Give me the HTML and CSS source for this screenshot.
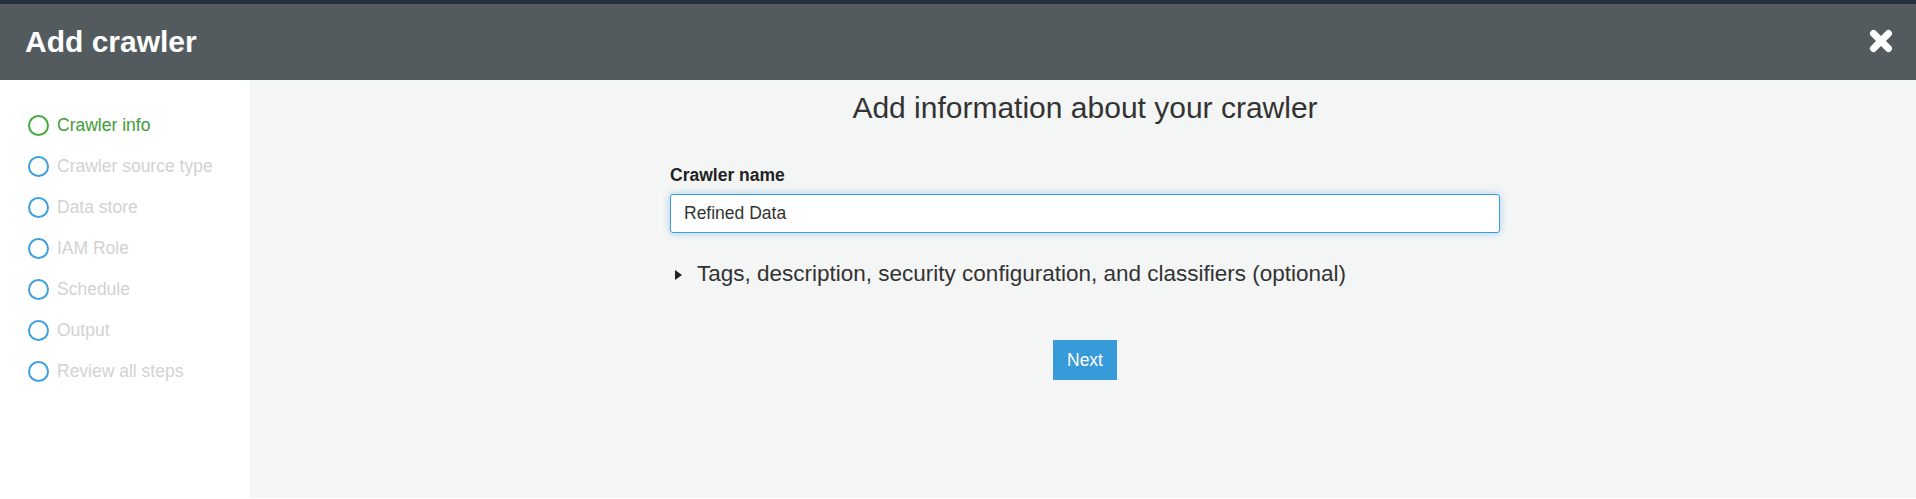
FILE: index.html
```html
<!DOCTYPE html>
<html lang="en">
<head>
<meta charset="utf-8">
<title>Add crawler</title>
<link rel="stylesheet" href="styles.css">
</head>
<body>
<div class="app">
  <div class="topstrip"></div>
  <header class="header">
    <h1 class="title">Add crawler</h1>
    <button class="close" aria-label="Close">
      <svg width="24" height="24" viewBox="0 0 24 24"><path d="M4.5 4.5 L19.5 19.5 M19.5 4.5 L4.5 19.5" stroke="#fff" stroke-width="7" stroke-linecap="round" fill="none"/></svg>
    </button>
  </header>
  <div class="body">
    <nav class="sidebar">
      <ul class="steps">
        <li class="step active"><span class="dot"></span>Crawler info</li>
        <li class="step"><span class="dot"></span>Crawler source type</li>
        <li class="step"><span class="dot"></span>Data store</li>
        <li class="step"><span class="dot"></span>IAM Role</li>
        <li class="step"><span class="dot"></span>Schedule</li>
        <li class="step"><span class="dot"></span>Output</li>
        <li class="step"><span class="dot"></span>Review all steps</li>
      </ul>
    </nav>
    <main class="main">
      <div class="column">
        <h2 class="heading">Add information about your crawler</h2>
        <label class="label" for="name">Crawler name</label>
        <input class="input" id="name" type="text" value="Refined Data">
        <div class="expander">
          <span class="caret"></span>
          <span>Tags, description, security configuration, and classifiers (optional)</span>
        </div>
        <div class="actions">
          <button class="btn-next">Next</button>
        </div>
      </div>
    </main>
  </div>
</div>
</body>
</html>
```
FILE: styles.css
```css
html, body {
  margin: 0;
  padding: 0;
  background: #ffffff;
}
body {
  font-family: "Liberation Sans", Arial, sans-serif;
  color: #333;
}
.app {
  height: 498px;
  display: flex;
  flex-direction: column;
}
.topstrip {
  height: 4px;
  background: #232f3e;
}
.header {
  height: 76px;
  background: #545b5e;
  display: flex;
  align-items: center;
  justify-content: space-between;
  padding: 0 23px 0 25px;
}
.title {
  margin: 0;
  font-size: 30px;
  font-weight: bold;
  color: #fff;
  line-height: 34px;
}
.close {
  background: none;
  border: 0;
  padding: 0;
  width: 24px;
  height: 24px;
  display: flex;
  margin-top: -2px;
}
.body {
  flex: 1;
  display: flex;
}
.sidebar {
  width: 250px;
  background: #fff;
}
.steps {
  list-style: none;
  margin: 0;
  padding: 25px 0 0 28px;
}
.step {
  display: flex;
  align-items: center;
  height: 41px;
  font-size: 17.5px;
  color: #d2d2d2;
}
.dot {
  width: 17px;
  height: 17px;
  border: 2px solid #3d9fe0;
  border-radius: 50%;
  margin-right: 8px;
  flex: none;
}
.step.active {
  color: #3e9c37;
}
.step.active .dot {
  border-color: #43ab3b;
}
.main {
  flex: 1;
  background: #f4f5f5;
  padding-left: 4px;
}
.column {
  width: 830px;
  margin: 0 auto;
  display: flex;
  flex-direction: column;
}
.heading {
  margin: 11px 0 0;
  font-size: 30px;
  font-weight: normal;
  line-height: 33px;
  text-align: center;
  color: #333;
}
.label {
  margin-top: 41px;
  font-size: 17.5px;
  font-weight: bold;
  line-height: 20px;
  color: #222;
}
.input {
  margin-top: 9px;
  height: 39px;
  box-sizing: border-box;
  border: 1px solid #3d9de0;
  border-radius: 3px;
  box-shadow: 0 0 7px rgba(61, 157, 224, 0.45);
  padding: 0 13px;
  font-family: "Liberation Sans", Arial, sans-serif;
  font-size: 17.5px;
  color: #333;
  background: #fff;
  outline: none;
}
.expander {
  margin-top: 28px;
  display: flex;
  align-items: center;
  font-size: 22.5px;
  line-height: 26px;
  color: #333;
}
.caret {
  width: 0;
  height: 0;
  border-top: 5.5px solid transparent;
  border-bottom: 5.5px solid transparent;
  border-left: 7px solid #222;
  margin: 1px 15px 0 5px;
}
.actions {
  margin-top: 53px;
  display: flex;
  justify-content: center;
}
.btn-next {
  height: 40px;
  padding: 0 14px;
  border: 0;
  border-radius: 0;
  background: #369bd8;
  color: #fff;
  font-family: "Liberation Sans", Arial, sans-serif;
  font-size: 17.5px;
}
```
